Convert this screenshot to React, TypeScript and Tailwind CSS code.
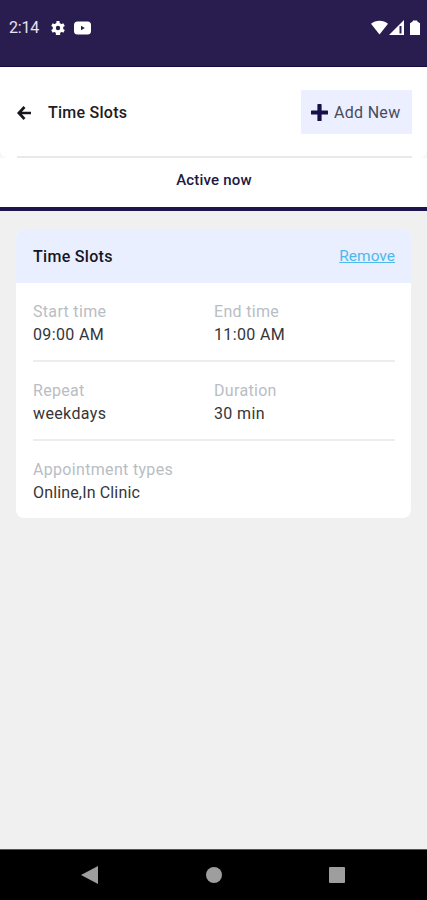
import type { ReactNode } from "react";

interface FieldProps {
  label: string;
  value: string;
  valueClass?: string;
}

function Field({ label, value, valueClass = "tracking-[0.36px]" }: FieldProps) {
  return (
    <div className="whitespace-nowrap text-[16px] leading-[22.5px]">
      <p className="tracking-[0.32px] text-[#b9bdc4]">{label}</p>
      <p className={`text-[#35353a] ${valueClass}`}>{value}</p>
    </div>
  );
}

function Row({ children }: { children: ReactNode }) {
  return <div className="grid h-[79px] grid-cols-[181px_1fr] border-b-2 border-[#ededef] pt-[18px]">{children}</div>;
}

function StatusBar() {
  return (
    <div className="flex h-[67px] items-start justify-between border-b border-[#160a40] bg-[#291d4f] pr-[7px] pl-[9px] text-white">
      <div className="flex h-[55px] items-center">
        <span className="w-[42px] pt-px text-[16px] tracking-[-0.2px] text-[#e6e4ee]">2:14</span>
        <svg className="size-[14px]" viewBox="0 0 14 14" fill="currentColor">
          <circle cx="7" cy="7" r="5.3" />
          <path d="M5.500 0h3l.7 14H4.800zM.2 4.900l1.500-2.600 12.100 6.800-1.500 2.600zM13.800 4.900l-1.500-2.600L.2 9.100l1.500 2.600z" />
          <circle cx="7" cy="7" r="2.200" fill="#291d4f" />
        </svg>
        <svg className="ml-[9px] h-[14px] w-[17px]" viewBox="0 0 17 14">
          <rect width="17" height="13" y=".5" rx="3.5" fill="currentColor" />
          <path d="M7 4.8v4.4L10.8 7z" fill="#291d4f" />
        </svg>
      </div>
      <div className="flex h-[55px] items-center">
        <svg className="h-[15px] w-[17px]" viewBox="0 0 17 15" fill="currentColor">
          <path d="M0 3.700C4.500-.4 12.500-.4 17 3.700L8.500 14.500z" />
        </svg>
        <svg className="ml-px h-[15px] w-[15px]" viewBox="0 0 15 15" fill="currentColor">
          <path d="M0 15 15 0v15z" />
          <path d="M10.5 6h2v7.500h-2z" fill="#291d4f" />
        </svg>
        <svg className="ml-[6px] h-[15px] w-[10px]" viewBox="0 0 10 15" fill="currentColor">
          <path d="M3 .5h4l.6 1.300L10 3.200V15H0V3.200l2.400-1.400z" />
        </svg>
      </div>
    </div>
  );
}

function Header() {
  return (
    <div className="bg-[#f7f7f7]">
      <div className="rounded-b-lg bg-white pr-[15px] pl-[17px]">
        <div className="flex h-[91px] items-start border-b-2 border-[#e9e9eb] pt-[23px]">
          <div className="flex h-[44px] items-center pt-[2px]">
            <svg className="h-[14px] w-[14px] text-[#17171b]" viewBox="0 0 14 14" fill="none" stroke="currentColor" strokeWidth="2.7">
              <path d="M7.500 1 1.800 7l5.700 6M1.800 7H14" />
            </svg>
            <h1 className="ml-[17px] text-[16px] font-medium tracking-[0.25px] text-[#1c1c22]">Time Slots</h1>
          </div>
          <button className="ml-auto flex h-[44px] w-[111px] items-center bg-[#ebefff] pl-[10px] text-[16px] tracking-[0.3px] whitespace-nowrap text-[#4a4b59]">
            <svg className="mr-[6px] size-[17px] text-[#17104a]" viewBox="0 0 17 17" fill="currentColor">
              <path d="M7 0h3a.6.6 0 0 1 .6.6v5.800h5.800a.6.6 0 0 1 .6.6v3a.6.6 0 0 1-.6.6h-5.800v5.800a.6.6 0 0 1-.6.6H7a.6.6 0 0 1-.6-.6v-5.800H.6A.6.6 0 0 1 0 10V7a.6.6 0 0 1 .6-.6h5.800V.6A.6.6 0 0 1 7 0z" />
            </svg>
            <span className="pt-[2px]">Add New</span>
          </button>
        </div>
      </div>
    </div>
  );
}

export default function App() {
  return (
    <div className="flex h-[900px] w-[427px] flex-col overflow-hidden bg-[#f0f0f0] font-['Roboto',sans-serif]">
      <StatusBar />
      <Header />
      <div className="flex h-[53px] items-center justify-center border-b-4 border-[#1d1450] bg-white pb-[5px] pl-px text-[15px] font-medium tracking-[0.2px] text-[#211943]">
        Active now
      </div>

      <div className="mx-4 mt-[18px] h-[289px] w-[395px] overflow-hidden rounded-lg bg-white">
        <div className="flex h-[54px] items-center justify-between bg-[#eaefff] pt-[2px] pr-[16px] pl-[17px] text-[16px]">
          <h2 className="font-medium tracking-[0.3px] text-[#16161f]">Time Slots</h2>
          <a href="#" className="text-[15.5px] text-[#4cb8ec] underline">
            Remove
          </a>
        </div>
        <div className="pr-[16px] pl-[17px]">
          <Row>
            <Field label="Start time" value="09:00 AM" />
            <Field label="End time" value="11:00 AM" />
          </Row>
          <Row>
            <Field label="Repeat" value="weekdays" />
            <Field label="Duration" value="30 min" />
          </Row>
          <div className="pt-[18px]">
            <Field label="Appointment types" value="Online,In Clinic" valueClass="tracking-[0.15px]" />
          </div>
        </div>
      </div>

      <div className="mt-auto flex h-[51px] items-center border-t border-[#555] bg-black pl-[81px] text-[#9e9e9e]">
        <svg className="h-[18px] w-[17px]" viewBox="0 0 17 18" fill="currentColor">
          <path d="M0 9 17 0v18z" />
        </svg>
        <div className="ml-[108px] size-[16px] rounded-full bg-current" />
        <div className="ml-[107px] size-[16px] rounded-[1px] bg-current" />
      </div>
    </div>
  );
}
